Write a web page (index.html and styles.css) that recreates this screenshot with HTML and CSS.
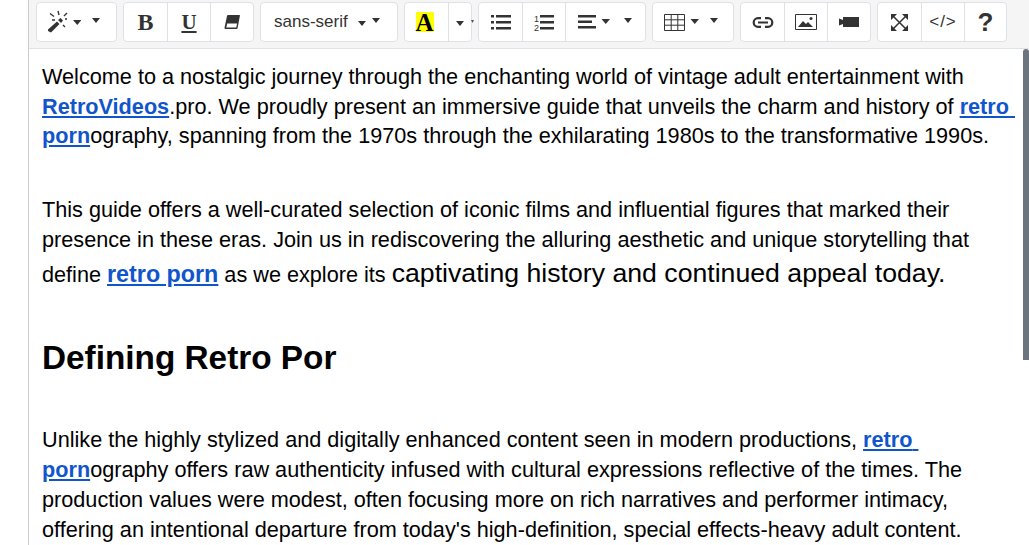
FILE: index.html
```html
<!DOCTYPE html>
<html lang="en">
<head>
<meta charset="utf-8">
<title>Editor</title>
<link rel="stylesheet" href="styles.css">
</head>
<body>
<div class="editor">
  <div class="toolbar">
    <div class="group">
      <button class="btn drop wand"><svg width="34" height="24" viewBox="0 0 34 24"><path d="M1 19.500 10 11.500l2.500 2.500-8.500 8.500-3-1.500z" fill="#333"/><path d="M11 10l2.500-2 2.500 2.500-2 2.500z" fill="#333"/><path d="M11 1l1 4M3 3.500l4 3M20 3l-3 3M18 9h2M5 10h3M16 15l2 2" stroke="#333" stroke-width="1.400" fill="none"/><path d="M26 10h8.500l-4.250 5z" fill="#333"/></svg><i class="caret"></i></button>
    </div>
    <div class="group">
      <button class="btn w43 serif-b">B</button>
      <button class="btn w43 serif-u">U</button>
      <button class="btn w43"><svg width="16" height="15" viewBox="0 0 16 15"><path d="M4 0h11.500q.5 0 .4.800L13.600 13q-.2 1-1.100 1H1.500q-1.200 0-1-1.200L3 1q.2-1 1-1z" fill="#333"/><path d="M3.200 8.500h9.900l-.8 4H2.300z" fill="#fff"/></svg></button>
    </div>
    <div class="group">
      <button class="btn drop font"><span>sans-serif</span><i class="caret down2"></i><i class="caret"></i></button>
    </div>
    <div class="group">
      <button class="btn w43"><span class="hl">A</span></button>
      <button class="btn w23"><i class="caret down2"></i><i class="caret stray"></i></button>
    </div>
    <div class="group">
      <button class="btn w43"><svg width="20" height="16" viewBox="0 0 20 16"><path d="M0 1h3v2.500H0zM0 7h3v2.500H0zM0 13h3v2.500H0zM5 1h15v2.500H5zM5 7h15v2.500H5zM5 13h15v2.500H5z" fill="#333"/></svg></button>
      <button class="btn w43"><svg width="20" height="17" viewBox="0 0 20 17"><text x="0" y="7.500" class="num">1</text><text x="0" y="16.500" class="num">2</text><path d="M6 1h14v2.500H6zM6 7h14v2.500H6zM6 13h14v2.500H6z" fill="#333"/></svg></button>
      <button class="btn drop align"><svg width="32" height="14" viewBox="0 0 32 14"><path d="M0 0h18v2.500H0zM0 5.500h14v2.500H0zM0 11h18v2.500H0z" fill="#333"/><path d="M23.500 4H32l-4.250 5z" fill="#333"/></svg><i class="caret"></i></button>
    </div>
    <div class="group">
      <button class="btn drop tbl"><svg width="35" height="17" viewBox="0 0 35 17"><path d="M.5.500h20v16H.5zM7.200.500v16M13.800.500v16M.5 5.800h20M.5 11.200h20" fill="none" stroke="#333"/><path d="M26.500 5H35l-4.250 5z" fill="#333"/></svg><i class="caret"></i></button>
    </div>
    <div class="group">
      <button class="btn w43"><svg width="22" height="11" viewBox="0 0 22 11"><path d="M9 1.200H6a4.300 4.300 0 0 0 0 8.600h3M13 1.200h3a4.300 4.300 0 0 1 0 8.600h-3M6 5.500h10" fill="none" stroke="#333" stroke-width="2.200"/></svg></button>
      <button class="btn w43"><svg width="22" height="16" viewBox="0 0 22 16"><path d="M.5.500h21v15H.5z" fill="none" stroke="#333"/><path d="M3 13l5-6 3 3 2-2 5 5z" fill="#333"/><circle cx="16" cy="4.500" r="1.500" fill="#333"/></svg></button>
      <button class="btn w43"><svg width="20" height="12" viewBox="0 0 20 12"><path d="M0 2.500l4 1.500V1h16v10H4V8L0 9.500z" fill="#333"/></svg></button>
    </div>
    <div class="group">
      <button class="btn w43"><svg width="17" height="17" viewBox="0 0 17 17"><path d="M2 2l13 13M15 2 2 15" stroke="#333" stroke-width="1.500"/><path d="M0 0h6L0 6zM17 0v6l-6-6zM0 17v-6l6 6zM17 17h-6l6-6z" fill="#333"/></svg></button>
      <button class="btn w43 code">&lt;/&gt;</button>
      <button class="btn w42 help">?</button>
    </div>
  </div>
  <div class="content">
    <p class="lead">Welcome to a nostalgic journey through the enchanting world of vintage adult entertainment with <a href="#">RetroVideos</a>.pro. We proudly present an immersive guide that unveils the charm and history of <a href="#">retro porn</a>ography, spanning from the 1970s through the exhilarating 1980s to the transformative 1990s.</p>
    <p>This guide offers a well-curated selection of iconic films and influential figures that marked their presence in these eras. Join us in rediscovering the alluring aesthetic and unique storytelling that define <a href="#" class="biglink">retro porn</a> as we explore its <span class="big">captivating history and continued appeal today.</span></p>
    <h2>Defining Retro Por</h2>
    <p>Unlike the highly stylized and digitally enhanced content seen in modern productions, <a href="#">retro porn</a>ography offers raw authenticity infused with cultural expressions reflective of the times. The production values were modest, often focusing more on rich narratives and performer intimacy, offering an intentional departure from today's high-definition, special effects-heavy adult content.</p>
  </div>
  <div class="thumb"></div>
</div>
</body>
</html>
```
FILE: styles.css
```css
* { box-sizing: border-box; }
html, body { margin: 0; height: 545px; overflow: hidden; background: #fff; }
body { padding-left: 28px; font-family: "Liberation Sans", Arial, sans-serif; color: #000; }
.editor { position: relative; height: 545px; border-left: 1px solid #ccc; overflow: hidden; }
.toolbar { display: flex; gap: 6px; height: 49px; padding: 2px 0 0 7px; background: #f5f5f5; border-bottom: 1px solid #dee2e6; }
.group { display: flex; height: 40px; background: #fff; border: 1px solid #dee2e6; border-radius: 4px; }
.btn { position: relative; display: flex; align-items: center; justify-content: center; height: 38px; padding: 0; background: transparent; border: 0; border-left: 1px solid #dee2e6; color: #333; font-family: "Liberation Sans", Arial, sans-serif; }
.btn:first-child { border-left: 0; }
.w23 { width: 23px; }
.w42 { width: 42px; }
.w43 { width: 43px; }
.drop { justify-content: flex-start; }
.wand { width: 79px; padding-left: 10px; gap: 11px; }
.font { width: 136px; padding-left: 13px; font-size: 17px; }
.font span { margin-right: 10px; }
.font .down2 { margin-right: 6px; }
.align { width: 80px; padding-left: 12px; gap: 14px; }
.tbl { width: 80px; padding-left: 11px; gap: 11px; }
.caret { display: block; flex: none; width: 0; height: 0; margin-top: -3px; border: 4.500px solid transparent; border-top: 5px solid #333; border-bottom: 0; }
.down2 { margin-top: 2px; }
.stray { position: absolute; left: 22px; top: 17px; width: 3px; height: 3px; margin: 0; border: 0; background: #555; clip-path: polygon(0 0, 100% 0, 50% 100%); }
.serif-b { font: bold 24px "Liberation Serif", serif; }
.serif-u { font: bold 21px "Liberation Serif", serif; text-decoration: underline; }
.hl { display: block; width: 18px; height: 20px; margin-right: 4px; background: #ff0; color: #000; font: bold 25px/22px "Liberation Serif", serif; text-align: center; }
.num { font: 9px "Liberation Sans", sans-serif; fill: #333; }
.code { font-size: 17px; letter-spacing: 1px; }
.help { font-size: 26px; font-weight: bold; }
.content { padding: 13px 14px 0 13px; font-size: 21.66px; line-height: 30px; }
.content p { margin: 0 0 43px; white-space: pre-wrap; }
.content .lead { margin-bottom: 44px; line-height: 29.6px; }
.content a { color: #1155cc; font-weight: bold; text-decoration: underline; }
.content .biglink { font-size: 23.3px; }
.big { font-size: 26.66px; line-height: 1.4; }
.content h2 { margin: 0 0 45px; font-size: 33.33px; line-height: 45px; font-weight: bold; }
.thumb { position: absolute; top: 49px; right: 0; width: 6px; height: 311px; background: #6c757d; border-radius: 3px 3px 0 0; }
```
